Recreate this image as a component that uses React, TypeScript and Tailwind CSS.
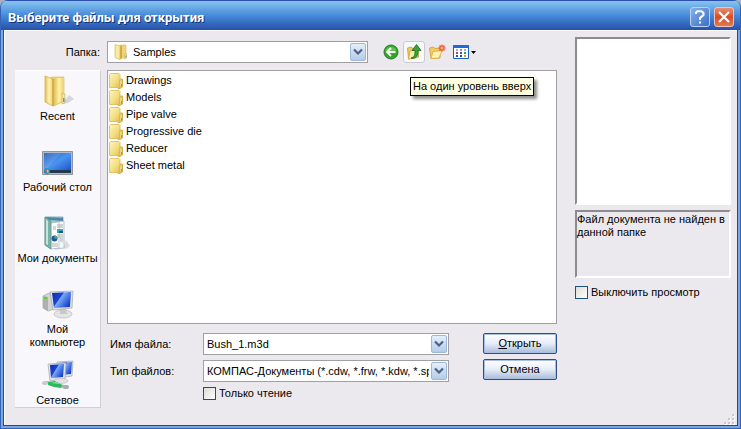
import { useState, type ReactNode } from 'react';

const folders = ['Drawings', 'Models', 'Pipe valve', 'Progressive die', 'Reducer', 'Sheet metal'];

function FolderIcon({ className }: { className?: string }) {
  return (
    <svg viewBox="0 0 14 16" className={className} aria-hidden="true">
      <defs>
        <linearGradient id="folder" x1="0" y1="0" x2="1" y2="1">
          <stop offset="0" stopColor="#fff6c0" />
          <stop offset="0.6" stopColor="#f3dc7c" />
          <stop offset="1" stopColor="#e2bd4c" />
        </linearGradient>
      </defs>
      <path d="M9 6h4.500v8L11 15.500H9z" fill="#f3de8c" stroke="#cfa53c" strokeWidth=".8" />
      <path d="M.5 1.500 1.500.5H10l1 1V14.500H.5z" fill="url(#folder)" stroke="#dcb851" strokeWidth=".8" />
      <path d="M11 7h2v7h-2z" fill="#f7e9ac" stroke="#cfa53c" strokeWidth=".6" />
      <path d="M12 11h1v2.500h-1z" fill="#58a8d0" />
    </svg>
  );
}

function SmallOpenFolderIcon({ className }: { className?: string }) {
  return (
    <svg viewBox="0 0 16 16" className={className} aria-hidden="true">
      <path d="M7 1h6v12l-6 2z" fill="#eed57a" stroke="#d6b450" strokeWidth=".6" />
      <path d="M7 2h2v12l-2 1z" fill="#cba748" />
      <path d="M11.500 9.500h2V14l-2 1z" fill="#f5e6a4" stroke="#cfac4c" strokeWidth=".5" />
      <path d="M12.500 11.500h1v2h-1z" fill="#3f98d8" />
      <path d="M2 .5l5 1.500v13.500L2 13.500z" fill="#fbe9a0" stroke="#d9b854" strokeWidth=".7" />
    </svg>
  );
}

function OpenFolderIcon() {
  return (
    <svg viewBox="0 0 32 32" className="size-8" aria-hidden="true">
      <defs>
        <linearGradient id="leaf" x1="0" y1="0" x2="1" y2="0">
          <stop offset="0" stopColor="#e3bf52" />
          <stop offset="0.5" stopColor="#fff1ae" />
          <stop offset="1" stopColor="#ecd06c" />
        </linearGradient>
      </defs>
      <path d="M20 29 27 20l5 4-6 4z" fill="#c3c1c8" opacity=".6" />
      <path d="M9 2h13v24l-10 5-3-2z" fill="#ecd06d" stroke="#d9b956" strokeWidth=".6" />
      <path d="M12 3h10v22l-10 5z" fill="url(#leaf)" />
      <path d="M20 18l3 1v9l-3 1z" fill="#f4e5a0" stroke="#d0ac48" strokeWidth=".6" />
      <path d="M21 23h1.500v4H21z" fill="#4da0d8" />
      <path d="M3 1l8 3v27l-8-4z" fill="url(#leaf)" stroke="#d7b24a" strokeWidth=".8" />
      <path d="M11 4v27" stroke="#b8923c" strokeWidth=".8" />
    </svg>
  );
}

function DesktopIcon() {
  return (
    <svg viewBox="0 0 32 32" className="size-8" aria-hidden="true">
      <defs>
        <linearGradient id="desk" x1="0" y1="0" x2="1" y2="1">
          <stop offset="0" stopColor="#2058b8" />
          <stop offset="0.5" stopColor="#4b94f0" />
          <stop offset="1" stopColor="#1a55cc" />
        </linearGradient>
      </defs>
      <path d="M.5 5.500h30v23H.5z" fill="#b4bac4" stroke="#8c94a2" />
      <path d="M2 7h27v17H2z" fill="url(#desk)" />
      <path d="M2 7h17L4 24H2z" fill="#fff" opacity=".12" />
      <path d="M2 24h27v3H2z" fill="#25384c" />
      <circle cx="5" cy="25" r="3" fill="#2b8cc0" />
      <path d="M3.500 23.500h1.500v1.500H3.500z" fill="#f06038" />
      <path d="M5 23.500h1.500v1.500H5z" fill="#8cd850" />
      <path d="M5 25h1.500v1.500H5z" fill="#f8d040" />
    </svg>
  );
}

function DocumentsIcon() {
  return (
    <svg viewBox="0 0 32 34" className="h-[34px] w-8" aria-hidden="true">
      <path d="M21 32l3-8 4 6-4 3z" fill="#cdd0d4" opacity=".7" />
      <path d="M3 1h18v5L9 33l-6-4z" fill="#a5cfd2" stroke="#6c9ca8" strokeWidth=".8" />
      <path d="M3 1l18 1v3L6 4z" fill="#4f88a4" />
      <path d="M13 6l9-1v27l-9 1z" fill="#f4f8fa" stroke="#90a4ac" strokeWidth=".6" />
      <path d="M9 7l8-1v26l-8 1z" fill="#fff" stroke="#98a8b0" strokeWidth=".6" />
      <path d="M15 9h6M15 11h6M15 19h6M15 21h6M18 23h3M18 25h3M11 11h3M11 13h3M10 28h6M10 30h6" stroke="#9aa7ae" strokeWidth=".9" />
      <path d="M15 13h6v4h-6z" fill="#40a4b4" />
      <path d="M17 15h4v2h-4z" fill="#185880" />
      <circle cx="12.500" cy="22.500" r="3" fill="#2455a4" />
      <path d="M12.500 22.500v-3a3 3 0 0 1 3 3z" fill="#50b070" />
      <path d="M3 1l6 4v28l-6-4z" fill="#77b3a2" stroke="#5d8f94" strokeWidth=".6" />
      <path d="M4 3l2 2v24l-2-1z" fill="#c6e4d8" />
    </svg>
  );
}

function ScreenGradient() {
  return (
    <defs>
      <linearGradient id="screen" x1="0" y1="0" x2="1" y2="0.600">
        <stop offset="0" stopColor="#102cac" />
        <stop offset="0.45" stopColor="#1a43d4" />
        <stop offset="0.5" stopColor="#78aaf8" />
        <stop offset="1" stopColor="#1742cc" />
      </linearGradient>
    </defs>
  );
}

function ComputerIcon() {
  return (
    <svg viewBox="0 0 32 32" className="size-8" aria-hidden="true">
      <ScreenGradient />
      <path d="M1 8l6-3 5 1v15l-6 2-5-3z" fill="#d4d5d3" stroke="#a0a2a0" strokeWidth=".7" />
      <path d="M1 8l5 1v14l-5-3z" fill="#aeb1ad" />
      <path d="M2 9h3v2H2z" fill="#4fd32f" />
      <ellipse cx="21" cy="26" rx="9" ry="4" fill="#e4e4e4" stroke="#b9b9bb" strokeWidth=".7" />
      <path d="M18 20h6l1 6h-7z" fill="#c7c8ca" />
      <path d="M8 4l23-1-1 17-19 2z" fill="#e2e2e2" stroke="#a6a6a8" strokeWidth=".7" />
      <path d="M10 5l19-1-1 15-16 1z" fill="url(#screen)" />
    </svg>
  );
}

function NetworkIcon() {
  return (
    <svg viewBox="0 0 32 32" className="size-8" aria-hidden="true">
      <ScreenGradient />
      <path d="M15 3l16-1-1 15-14 2z" fill="#dedfe1" stroke="#a6a6a8" strokeWidth=".7" />
      <path d="M17 4l13-1-1 12-11 1z" fill="url(#screen)" />
      <path d="M6 5l18-1-1 16-15 2z" fill="#e2e2e2" stroke="#a6a6a8" strokeWidth=".7" />
      <path d="M8 6l14-1-1 13-12 1z" fill="url(#screen)" />
      <ellipse cx="19" cy="22" rx="7" ry="2.500" fill="#e2e2e4" stroke="#b9b9bb" strokeWidth=".6" />
      <path d="M1 23l4-1 22 5-3 3z" fill="#b4b8b4" />
      <path d="M6 23l7-1 7 4-1 3-7-1-6-2z" fill="#2fb85c" />
      <path d="M9 24l5-1 4 2z" fill="#8be8a4" />
      <ellipse cx="3" cy="24" rx="3" ry="2" fill="#c9ccca" />
      <ellipse cx="24" cy="28" rx="3" ry="2" fill="#a9adab" />
    </svg>
  );
}

function Chevron() {
  return (
    <span className="flex h-[18px] w-4 items-center justify-center rounded-xs border border-[#9db7d8] bg-linear-to-b from-[#e4effb] to-[#b4cbe8]">
      <svg viewBox="0 0 10 8" className="h-2 w-2.5" aria-hidden="true">
        <path d="M1 1.500l4 4 4-4" fill="none" stroke="#4d6185" strokeWidth="2.200" />
      </svg>
    </span>
  );
}

function Check({ id, label }: { id: string; label: string }) {
  return (
    <div className="flex items-center gap-[3px]">
      <input id={id} type="checkbox" className="size-[13px] appearance-none border border-[#1c5180] bg-linear-to-br from-[#dcdcd7] to-white checked:bg-[#21a121]" />
      <label htmlFor={id}>{label}</label>
    </div>
  );
}

const places: { label: string; icon: ReactNode }[] = [
  { label: 'Recent', icon: <OpenFolderIcon /> },
  { label: 'Рабочий стол', icon: <DesktopIcon /> },
  { label: 'Мои документы', icon: <DocumentsIcon /> },
  { label: 'Мой\nкомпьютер', icon: <ComputerIcon /> },
  { label: 'Сетевое', icon: <NetworkIcon /> },
];

const actionButton =
  'h-[21px] w-full rounded-xs border border-[#2c4f80] bg-linear-to-b from-white via-[#e6edf8] to-[#a8bbd9] text-center shadow-[inset_0_0_0_1px_#a9c0e4]';

const sunken = 'border-2 border-t-[#8c8b90] border-r-white border-b-white border-l-[#8c8b90]';

function Toolbar() {
  return (
    <div className="flex items-center">
      <button aria-label="Назад" className="flex size-4 items-center justify-center">
        <svg viewBox="0 0 16 16" className="size-4" aria-hidden="true">
          <circle cx="8" cy="8" r="7" fill="#35a52c" stroke="#25801f" />
          <path d="M2.500 6a6 5 0 0 1 11 0c-3 2-8 2-11 0z" fill="#7ed66c" opacity=".6" />
          <path d="M12.500 8H5M8 4 4 8l4 4" fill="none" stroke="#fff" strokeWidth="1.800" />
        </svg>
      </button>
      <div className="relative ml-1">
        <button aria-label="На один уровень вверх" className="flex size-[22px] items-center justify-center rounded-[3px] border border-[#cccbd2] bg-[#f8f8fa]">
          <svg viewBox="0 0 16 16" className="size-4" aria-hidden="true">
            <path d="M1.500 4l4-1 1 1.500 6-1.500v10l-10 2z" fill="#eccb62" stroke="#c79a36" strokeWidth=".8" />
            <path d="M2.500 15l1.500-8 9-1.500-1.500 8z" fill="#ffefa4" stroke="#cfa542" strokeWidth=".8" />
            <path d="M5.500 13.500c3 0 3.500-3 3.500-7H6L10.500.500 15 6.500h-3c0 5-1.500 8-6.500 8z" fill="#38a43c" stroke="#1a6c22" strokeWidth=".8" />
          </svg>
        </button>
        <span role="tooltip" className="absolute top-[36px] left-[7px] z-10 border border-black bg-[#ffffe1] px-0.5 py-px leading-[15px] whitespace-nowrap shadow-[3px_3px_3px_rgba(0,0,0,0.45)]">
          На один уровень вверх
        </span>
      </div>
      <button aria-label="Создать папку" className="ml-[3px] flex size-[18px] items-center justify-center">
        <svg viewBox="0 0 18 16" className="h-4 w-[18px]" aria-hidden="true">
          <path d="M1.500 4l4-1 1.500 1.500 5-.5V14l-9 .5z" fill="#f3cd62" stroke="#c99a36" strokeWidth=".8" />
          <path d="M3 14.500l2-7 9-1-3 7.500z" fill="#fff1ae" stroke="#dba945" strokeWidth=".8" />
          <path d="M14 .5v7M10.500 4h7M11.500 1.500l5 5M16.500 1.500l-5 5" stroke="#f0552c" strokeWidth="1.500" />
          <circle cx="14" cy="4" r="1.500" fill="#ffb48c" />
        </svg>
      </button>
      <button aria-label="Вид" className="ml-[7px] flex items-center gap-0.5">
        <svg viewBox="0 0 16 14" className="h-3.5 w-4" aria-hidden="true">
          <path d="M.5.5h15v13H.5z" fill="#fff" stroke="#1c5fc8" />
          <path d="M0 0h16v3H0z" fill="#2268d8" />
          <path d="M3 4h2v2H3zM11 4h2v2h-2z" fill="#a3acb8" />
          <path d="M7 4h2v2H7z" fill="#7f95b4" />
          <path d="M3 7h2v2H3z" fill="#c04434" />
          <path d="M3 10h2v2H3zM7 7h2v2H7z" fill="#2f58ac" />
          <path d="M7 10h2v2H7z" fill="#284c9c" />
          <path d="M11 7h2v2h-2z" fill="#3a9a4c" />
          <path d="M11 10h2v2h-2z" fill="#d4a32c" />
        </svg>
        <svg viewBox="0 0 5 3" className="h-[3px] w-[5px]" aria-hidden="true">
          <path d="M0 0h5L2.500 3z" />
        </svg>
      </button>
    </div>
  );
}

export default function App() {
  const [fileName, setFileName] = useState('Bush_1.m3d');

  return (
    <div className="min-h-screen bg-[#a9b0c0] font-['Liberation_Sans',Arial,sans-serif] text-[11px] leading-[13px] text-black">
      <div className="flex min-h-screen flex-col overflow-hidden rounded-t-lg border-x border-b border-[#3563b8] bg-[#7ba7e0]">
        <header className="flex h-[30px] items-center justify-between border-t border-[#2c4fae] bg-linear-to-b from-[#86c4ee] via-[#478ada] to-[#2850a8] pr-1.5 pl-[7px]">
          <h1 className="pt-1 font-['Roboto',sans-serif] text-[13px] leading-4 font-bold text-white [text-shadow:1px_1px_0_#123075]">
            Выберите файлы для открытия
          </h1>
          <div className="flex gap-1 pt-0.5">
            <button aria-label="Справка" className="flex size-5 items-center justify-center rounded-[3px] border border-[#b7d1f2] bg-linear-to-br from-[#86b0e8] to-[#3a6fc8]">
              <svg viewBox="0 0 12 14" className="h-3.5 w-3" aria-hidden="true">
                <path d="M2 4V2.500L3.500 1.200h4L9.500 3v2L6 8v2M6 11.500v2" fill="none" stroke="#fff" strokeWidth="2" />
              </svg>
            </button>
            <button aria-label="Закрыть" className="flex size-5 items-center justify-center rounded-[3px] border border-[#f0c4bc] bg-linear-to-b from-[#e8906c] via-[#d84c24] to-[#e07850]">
              <svg viewBox="0 0 12 12" className="size-3" aria-hidden="true">
                <path d="M1 1l10 10M11 1L1 11" stroke="#fff" strokeWidth="2.200" />
              </svg>
            </button>
          </div>
        </header>

        <div className="flex grow border-x-2 border-b-2 border-[#7ba7e0] bg-[#2648a0] px-px pb-px">
          <main className="flex grow gap-[18px] border-t border-l border-white bg-[#ebe9ed] pt-2.5 pr-1.5 pl-2.5">
            <section className="min-w-0 grow">
              <div className="flex items-center">
                <label htmlFor="dir" className="mr-[7px] w-[85px] text-right">Папка:</label>
                <div className="relative mr-[15px] w-[261px]">
                  <select id="dir" className="block h-[22px] w-full appearance-none border border-[#a0a0a4] bg-white pl-[25px]">
                    <option>Samples</option>
                  </select>
                  <SmallOpenFolderIcon className="pointer-events-none absolute top-[3px] left-1.5 size-4" />
                  <span className="pointer-events-none absolute top-0.5 right-0.5"><Chevron /></span>
                </div>
                <Toolbar />
              </div>

              <div className="mt-[7px] flex gap-1.5">
                <nav className="flex h-[338px] w-[86px] shrink-0 flex-col border-t border-r border-b border-t-white border-r-[#d0ced6] border-b-[#d0ced6] bg-[#f8f7fc] pt-1">
                  {places.map(p => (
                    <button key={p.label} className="flex h-[71px] shrink-0 flex-col items-center gap-[3px] whitespace-pre-line last:h-12">
                      <span className="flex h-8 items-center">{p.icon}</span>
                      {p.label}
                    </button>
                  ))}
                </nav>

                <div className="min-w-0 grow">
                  <ul className="h-[254px] border border-[#a0a0a4] bg-white pt-px pl-px">
                    {folders.map(name => (
                      <li key={name} className="flex h-[17px] items-center gap-[3px]">
                        <FolderIcon className="h-4 w-3.5" />
                        {name}
                      </li>
                    ))}
                  </ul>

                  <form className="mt-[9px] flex justify-between" onSubmit={e => e.preventDefault()}>
                    <div className="grid grid-cols-[93px_246px] items-center gap-y-[5px] pl-[3px]">
                      <label htmlFor="name">Имя файла:</label>
                      <div className="flex h-[22px] items-center border border-[#a0a0a4] bg-white pr-px">
                        <input id="name" value={fileName} onChange={e => setFileName(e.target.value)} className="min-w-0 grow px-[3px] outline-none" />
                        <button type="button" aria-label="Список файлов"><Chevron /></button>
                      </div>
                      <label htmlFor="type">Тип файлов:</label>
                      <div className="relative">
                        <select id="type" className="block h-[22px] w-full appearance-none border border-[#a0a0a4] bg-white pr-[19px] pl-[3px]">
                          <option>КОМПАС-Документы (*.cdw, *.frw, *.kdw, *.spw, *.m3d, *.a3d)</option>
                        </select>
                        <span className="pointer-events-none absolute top-0.5 right-0.5"><Chevron /></span>
                      </div>
                      <div className="col-start-2">
                        <Check id="readonly" label="Только чтение" />
                      </div>
                    </div>
                    <div className="flex w-[74px] flex-col gap-[5px]">
                      <button type="submit" className={actionButton}><u>О</u>ткрыть</button>
                      <button type="button" className={actionButton}>Отмена</button>
                    </div>
                  </form>
                </div>
              </div>
            </section>

            <aside className="-mt-1 flex w-[156px] shrink-0 flex-col">
              <div className={`h-[168px] bg-white ${sunken}`} />
              <p className={`mt-[5px] mb-2 h-[68px] pt-px ${sunken}`}>
                Файл документа не найден в данной папке
              </p>
              <Check id="nopreview" label="Выключить просмотр" />
              <svg viewBox="0 0 12 12" className="mt-auto -mr-1 size-3 self-end" aria-hidden="true">
                <path d="M10 2h2v2h-2zM6 6h2v2H6zM10 6h2v2h-2zM2 10h2v2H2zM6 10h2v2H6zM10 10h2v2h-2z" fill="#fff" />
                <path d="M9 1h2v2H9zM5 5h2v2H5zM9 5h2v2H9zM1 9h2v2H1zM5 9h2v2H5zM9 9h2v2H9z" fill="#c9c6cd" />
              </svg>
            </aside>
          </main>
        </div>
      </div>
    </div>
  );
}
